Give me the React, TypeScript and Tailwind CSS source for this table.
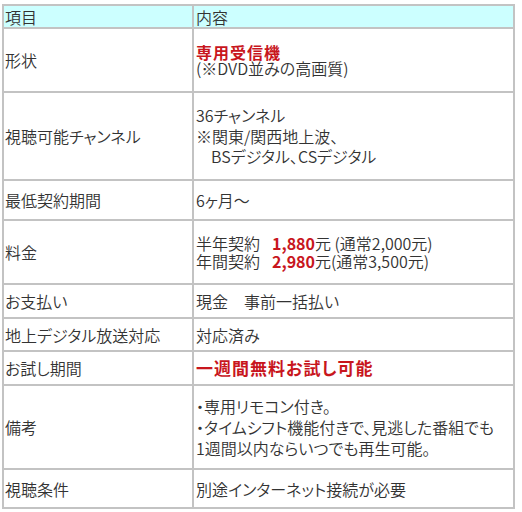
import React from "react";

const red = "text-[#c8161d] font-bold";

type Row = { h: string; label: string; head?: boolean; content: React.ReactNode };

const rows: Row[] = [
  { h: "h-[23px]", label: "項目", head: true, content: "内容" },
  {
    h: "h-[64px]",
    label: "形状",
    content: (
      <div className="leading-[16px]">
        <span className={`${red} tracking-[1px]`}>専用受信機</span>
        <br />
        (※DVD並みの高画質)
      </div>
    ),
  },
  {
    h: "h-[88px]",
    label: "視聴可能チャンネル",
    content: (
      <div className="leading-[20.5px]">
        36チャンネル
        <br />
        ※関東/関西地上波、
        <br />
        <span className="pl-[15px]">BSデジタル、CSデジタル</span>
      </div>
    ),
  },
  { h: "h-[40px]", label: "最低契約期間", content: "6ヶ月～" },
  {
    h: "h-[64px]",
    label: "料金",
    content: (
      <div className="leading-[18px]">
        半年契約<span className={`${red} ml-[12px]`}>1,880</span>元 (通常2,000元)
        <br />
        年間契約<span className={`${red} ml-[12px]`}>2,980</span>元(通常3,500元)
      </div>
    ),
  },
  { h: "h-[34px]", label: "お支払い", content: "現金　事前一括払い" },
  { h: "h-[33px]", label: "地上デジタル放送対応", content: "対応済み" },
  {
    h: "h-[34px]",
    label: "お試し期間",
    content: <span className={`${red} text-[17px] tracking-[1px]`}>一週間無料お試し可能</span>,
  },
  {
    h: "h-[84px]",
    label: "備考",
    content: (
      <div className="leading-[21px]">
        ・専用リモコン付き。
        <br />
        ・タイムシフト機能付きで、見逃した番組でも
        <br />
        1週間以内ならいつでも再生可能。
      </div>
    ),
  },
  { h: "h-[39px]", label: "視聴条件", content: "別途インターネット接続が必要" },
];

export default function App() {
  return (
    <div className="w-[522px] h-[512px] bg-white pt-[4px] pl-[2px] font-['Noto_Sans_CJK_JP',sans-serif] font-[350] [font-feature-settings:'palt'] text-[16px] text-[#333333]">
      <table className="w-[513px] table-fixed border-separate border-spacing-0 border-l-2 border-t-2 border-[#c3c3c3]">
        <colgroup>
          <col className="w-[190px]" />
          <col />
        </colgroup>
        <tbody>
          {rows.map((r, i) => (
            <tr key={i} className={r.h}>
              <td
                className={`border-r-2 border-b-2 border-[#c3c3c3] p-0 pl-[1px] align-middle leading-[18px] whitespace-nowrap ${
                  r.head ? "bg-[#ccffff]" : ""
                }`}
              >
                {r.label}
              </td>
              <td
                className={`border-r-2 border-b-2 border-[#c3c3c3] p-0 pl-[2px] align-middle leading-[18px] whitespace-nowrap ${
                  r.head ? "bg-[#ccffff]" : ""
                }`}
              >
                {r.content}
              </td>
            </tr>
          ))}
        </tbody>
      </table>
    </div>
  );
}
